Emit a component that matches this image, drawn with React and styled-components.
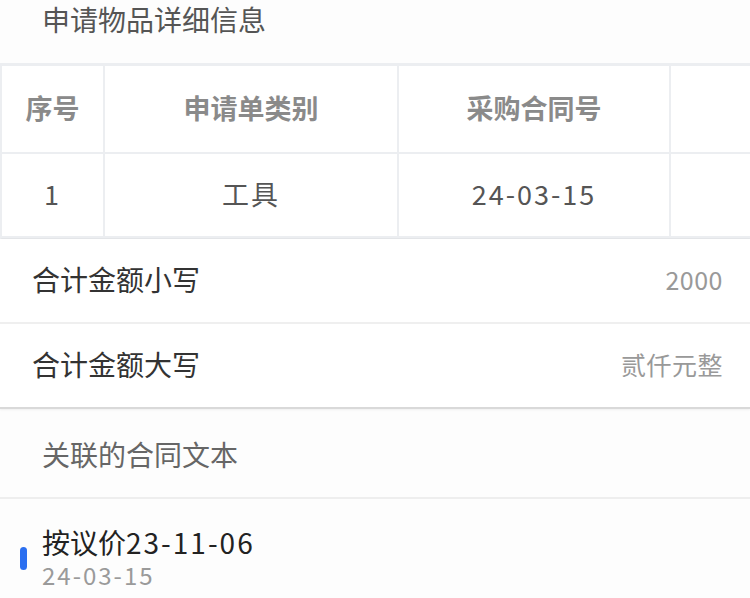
import React from 'react';
import styled, { createGlobalStyle } from 'styled-components';

const GlobalStyle = createGlobalStyle`
  html, body {
    margin: 0;
    padding: 0;
    background: #fdfdfd;
    font-family: "Noto Sans CJK SC", "Noto Sans", sans-serif;
  }
`;

const Page = styled.div`
  width: 750px;
  height: 598px;
  overflow: hidden;
  display: flex;
  flex-direction: column;
  background: #fdfdfd;
`;

const SectionTitle = styled.div`
  height: 63px;
  padding: 0 42px;
  font-size: 28px;
  line-height: 38px;
  color: #555;
  flex-shrink: 0;
`;

const Table = styled.div`
  display: grid;
  grid-template-columns: 103px 294px 272px 1fr;
  border-top: 3px solid #eceef1;
  border-left: 2px solid #eceef1;
  border-bottom: 1px solid #e4e6e9;
  background: #fff;
  flex-shrink: 0;
`;

const Cell = styled.div`
  height: ${(p) => (p.$head ? '82px' : '78px')};
  padding-bottom: 4px;
  display: flex;
  align-items: center;
  justify-content: center;
  border-right: 2px solid #eceef1;
  border-bottom: 2px solid #eceef1;
  font-size: 27px;
  font-weight: ${(p) => (p.$head ? 700 : 400)};
  color: ${(p) => (p.$head ? '#8a8a8a' : '#555')};
  &:nth-child(4n) {
    border-right: none;
  }
`;

const Num = styled.span`
  letter-spacing: 2px;
`;

const AmountBlock = styled.div`
  background: #fff;
  border-bottom: 2px solid #d9d9d9;
  box-shadow: 0 1px 2px rgba(0, 0, 0, 0.06);
  flex-shrink: 0;
`;

const AmountRow = styled.div`
  height: 79px;
  padding: 0 27px 4px 32px;
  display: flex;
  align-items: center;
  justify-content: space-between;
  & + & {
    border-top: 2px solid #efefef;
  }
`;

const Label = styled.span`
  font-size: 28px;
  color: #333;
`;

const Value = styled.span`
  font-size: 25px;
  color: #999;
  letter-spacing: 0.5px;
`;

const ContractHead = styled.div`
  height: 90px;
  padding: 2px 42px 0;
  box-sizing: border-box;
  display: flex;
  align-items: center;
  font-size: 28px;
  color: #666;
  border-bottom: 2px solid #eeeeee;
  flex-shrink: 0;
`;

const ContractItem = styled.div`
  display: flex;
  align-items: center;
  gap: 15px;
  padding: 26px 20px 0;
`;

const Marker = styled.span`
  width: 7px;
  height: 23px;
  border-radius: 4px;
  background: #2b6ff0;
  flex-shrink: 0;
`;

const ItemText = styled.div`
  display: flex;
  flex-direction: column;
`;

const ItemTitle = styled.div`
  font-size: 28px;
  line-height: 34px;
  color: #222;
`;

const ItemDate = styled.div`
  font-size: 24px;
  line-height: 32px;
  color: #9a9a9a;
  letter-spacing: 2px;
`;

const headers = ['序号', '申请单类别', '采购合同号', ''];
const rows = [['1', '工具', '24-03-15', '']];

const amounts = [
  { label: '合计金额小写', value: '2000' },
  { label: '合计金额大写', value: '贰仟元整' },
];

export default function App() {
  return (
    <Page>
      <GlobalStyle />
      <SectionTitle>申请物品详细信息</SectionTitle>
      <Table>
        {headers.map((h, i) => (
          <Cell key={`h${i}`} $head>
            {h}
          </Cell>
        ))}
        {rows.map((r) =>
          r.map((c, i) => (
            <Cell key={`c${i}`}>
              <Num>{c}</Num>
            </Cell>
          ))
        )}
      </Table>
      <AmountBlock>
        {amounts.map((a) => (
          <AmountRow key={a.label}>
            <Label>{a.label}</Label>
            <Value>{a.value}</Value>
          </AmountRow>
        ))}
      </AmountBlock>
      <ContractHead>关联的合同文本</ContractHead>
      <ContractItem>
        <Marker />
        <ItemText>
          <ItemTitle>
            按议价<Num>23-11-06</Num>
          </ItemTitle>
          <ItemDate>24-03-15</ItemDate>
        </ItemText>
      </ContractItem>
    </Page>
  );
}
